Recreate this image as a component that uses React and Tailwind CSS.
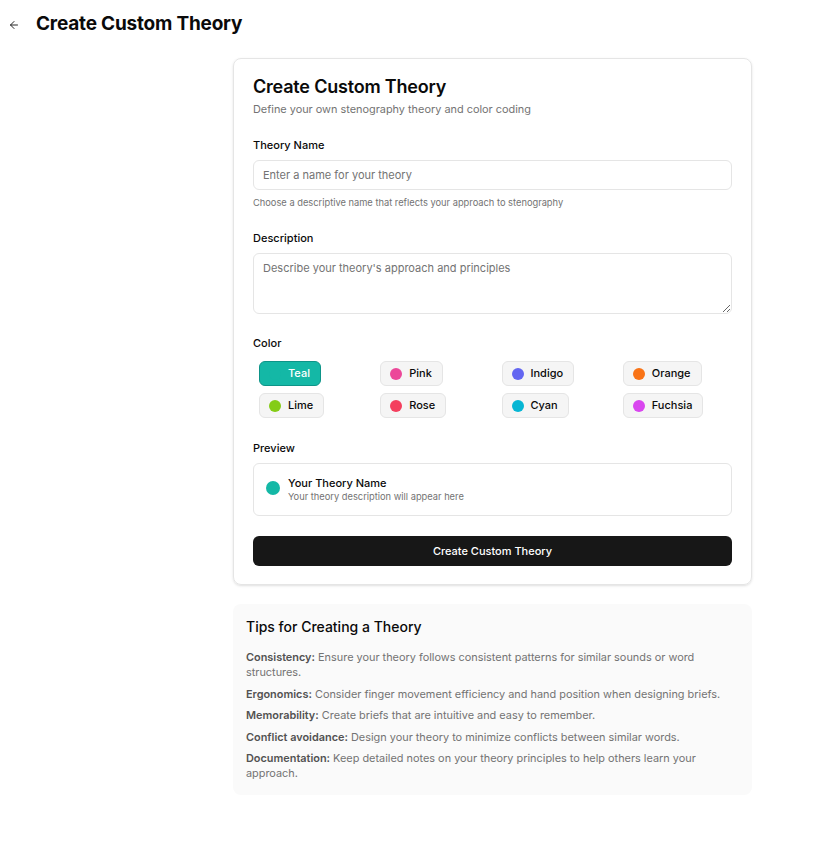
import React, { useState } from 'react';
import { ArrowLeft } from 'lucide-react';

const colors = [
  { name: 'Teal', dot: 'bg-[#14b8a6]' },
  { name: 'Pink', dot: 'bg-[#ec4899]' },
  { name: 'Indigo', dot: 'bg-[#6366f1]' },
  { name: 'Orange', dot: 'bg-[#f97316]' },
  { name: 'Lime', dot: 'bg-[#84cc16]' },
  { name: 'Rose', dot: 'bg-[#f43f5e]' },
  { name: 'Cyan', dot: 'bg-[#06b6d4]' },
  { name: 'Fuchsia', dot: 'bg-[#d946ef]' },
];

const tips = [
  ['Consistency:', 'Ensure your theory follows consistent patterns for similar sounds or word structures.'],
  ['Ergonomics:', 'Consider finger movement efficiency and hand position when designing briefs.'],
  ['Memorability:', 'Create briefs that are intuitive and easy to remember.'],
  ['Conflict avoidance:', 'Design your theory to minimize conflicts between similar words.'],
  ['Documentation:', 'Keep detailed notes on your theory principles to help others learn your approach.'],
];

const App = () => {
  const [selected, setSelected] = useState('Teal');

  return (
    <div className="min-h-screen bg-white text-[#0a0a0a] font-['Inter',sans-serif]">
      {/* Header */}
      <div className="flex items-center h-[46px] pt-[3px] pl-[8px]">
        <button className="w-[12px] h-[12px] flex items-center justify-center text-neutral-800">
          <ArrowLeft className="w-[12px] h-[12px]" strokeWidth={2} />
        </button>
        <h1 className="ml-[16px] text-[19px] font-bold tracking-[-0.2px]">Create Custom Theory</h1>
      </div>

      <div className="ml-[233px] w-[519px] pt-[12px] pb-[60px]">
        {/* Form card */}
        <div className="rounded-lg border border-[#e5e5e5] shadow-sm px-[19px] pt-[16px] pb-[18px]">
          <h2 className="text-[18px] font-semibold leading-[24px] tracking-[-0.2px]">Create Custom Theory</h2>
          <p className="mt-[2px] text-[10.9px] leading-[16px] text-[#737373]">Define your own stenography theory and color coding</p>

          <div className="mt-[20px]">
            <label className="block text-[11px] leading-[16px] font-medium">Theory Name</label>
            <input
              className="mt-[7px] w-full h-[30px] rounded-md border border-[#e5e5e5] px-[9px] text-[11px] placeholder:text-[#737373] outline-none"
              placeholder="Enter a name for your theory"
            />
            <p className="mt-[6px] text-[9.3px] leading-[13px] text-[#737373]">Choose a descriptive name that reflects your approach to stenography</p>
          </div>

          <div className="mt-[21px]">
            <label className="block text-[11px] leading-[16px] font-medium">Description</label>
            <textarea
              className="mt-[7px] block w-full h-[61px] rounded-md border border-[#e5e5e5] px-[9px] py-[6px] text-[11px] placeholder:text-[#737373] outline-none"
              placeholder="Describe your theory's approach and principles"
            />
          </div>

          <div className="mt-[21px]">
            <label className="block text-[11px] leading-[16px] font-medium">Color</label>
            <div className="mt-[10px] ml-[6px] grid grid-cols-4 gap-x-3 gap-y-[7px]">
              {colors.map((c) => {
                const active = selected === c.name;
                return (
                  <div key={c.name}>
                    <button
                      onClick={() => setSelected(c.name)}
                      className={
                        active
                          ? 'flex items-center gap-[7px] h-[25px] pl-[9px] pr-[10px] rounded-md border border-[#0d9488] bg-[#14b8a6] text-white text-[11px] font-medium'
                          : 'flex items-center gap-[7px] h-[25px] pl-[9px] pr-[10px] rounded-md border border-[#e5e5e5] bg-[#f5f5f5] text-[11px] font-medium'
                      }
                    >
                      <span className={`w-[12px] h-[12px] rounded-full ${c.dot}`} />
                      {c.name}
                    </button>
                  </div>
                );
              })}
            </div>
          </div>

          <div className="mt-[22px]">
            <label className="block text-[11px] leading-[16px] font-medium">Preview</label>
            <div className="mt-[7px] h-[53px] rounded-md border border-[#e5e5e5] flex items-center px-[12px] gap-[8px]">
              <span className="w-[14px] h-[14px] rounded-full bg-[#14b8a6] -mt-[4px]" />
              <div>
                <div className="text-[11px] font-medium leading-[14px]">Your Theory Name</div>
                <div className="text-[9.3px] text-[#737373] leading-[13px]">Your theory description will appear here</div>
              </div>
            </div>
          </div>

          <button className="mt-[20px] w-full h-[30px] rounded-md bg-[#171717] text-white text-[11px] font-medium">
            Create Custom Theory
          </button>
        </div>

        {/* Tips */}
        <div className="mt-[19px] rounded-lg bg-[#fafafa] px-[13px] pt-[13px] pb-[14px]">
          <h3 className="text-[14px] leading-[20px] font-medium">Tips for Creating a Theory</h3>
          <ul className="mt-[13px] space-y-[6.5px] text-[10.9px] leading-[15px] text-[#737373]">
            {tips.map(([b, t]) => (
              <li key={b}>
                <span className="font-semibold text-[#525252]">{b}</span> {t}
              </li>
            ))}
          </ul>
        </div>
      </div>
    </div>
  );
};

export default App;
